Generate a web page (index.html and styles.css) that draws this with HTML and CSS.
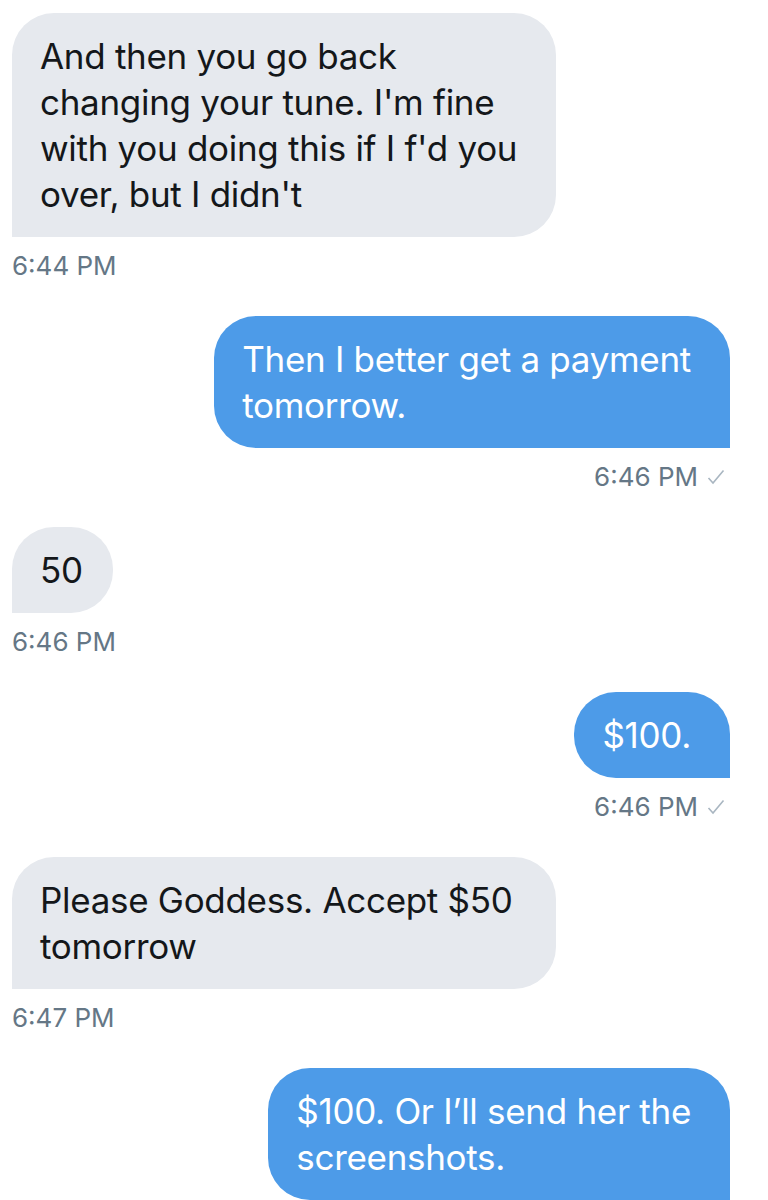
FILE: index.html
```html
<!DOCTYPE html>
<html lang="en">
<head>
    <meta charset="UTF-8">
    <meta name="viewport" content="width=device-width, initial-scale=1.0">
    <title>Messages</title>
    <link rel="stylesheet" href="styles.css">
</head>
<body>
    <div class="conversation">
        <div class="message received">
            <div class="bubble">And then you go back changing your tune. I'm fine with you doing this if I f'd you over, but I didn't</div>
            <div class="meta">6:44 PM</div>
        </div>

        <div class="message sent">
            <div class="bubble">Then I better get a payment<br>tomorrow.</div>
            <div class="meta">6:46 PM
                <svg class="check" width="18" height="16" viewBox="0 0 18 16"><polyline points="1.5,9 6,14 16.5,1.5" fill="none" stroke="#a9b6c1" stroke-width="1.6"/></svg>
            </div>
        </div>

        <div class="message received">
            <div class="bubble">50</div>
            <div class="meta">6:46 PM</div>
        </div>

        <div class="message sent">
            <div class="bubble">$100.</div>
            <div class="meta">6:46 PM
                <svg class="check" width="18" height="16" viewBox="0 0 18 16"><polyline points="1.5,9 6,14 16.5,1.5" fill="none" stroke="#a9b6c1" stroke-width="1.6"/></svg>
            </div>
        </div>

        <div class="message received">
            <div class="bubble">Please Goddess. Accept $50 tomorrow</div>
            <div class="meta">6:47 PM</div>
        </div>

        <div class="message sent">
            <div class="bubble">$100. Or I’ll send her the<br>screenshots.</div>
        </div>
    </div>
</body>
</html>
```

FILE: styles.css
```css
body {
    margin: 0;
    background-color: #ffffff;
    font-family: Inter, "Liberation Sans", Arial, sans-serif;
}
.conversation {
    display: flex;
    flex-direction: column;
    gap: 35px;
    padding: 13px 38px 0 12px;
}
.message {
    display: flex;
    flex-direction: column;
}
.message.received {
    align-items: flex-start;
}
.message.sent {
    align-items: flex-end;
}
.bubble {
    max-width: 486px;
    padding: 20px 30px 20px 28px;
    font-size: 35px;
    line-height: 46px;
    letter-spacing: -0.3px;
    border-radius: 42px;
}
.received .bubble {
    background-color: #e6e9ee;
    color: #14171a;
    border-bottom-left-radius: 0;
}
.sent .bubble {
    background-color: #4d9be8;
    color: #ffffff;
    white-space: nowrap;
    padding-right: 39px;
    border-bottom-right-radius: 0;
}
.meta {
    display: flex;
    align-items: center;
    gap: 9px;
    margin-top: 14px;
    font-size: 26px;
    line-height: 30px;
    color: #657786;
}
.sent .meta {
    margin-right: 5px;
}
.check {
    display: block;
}
```
